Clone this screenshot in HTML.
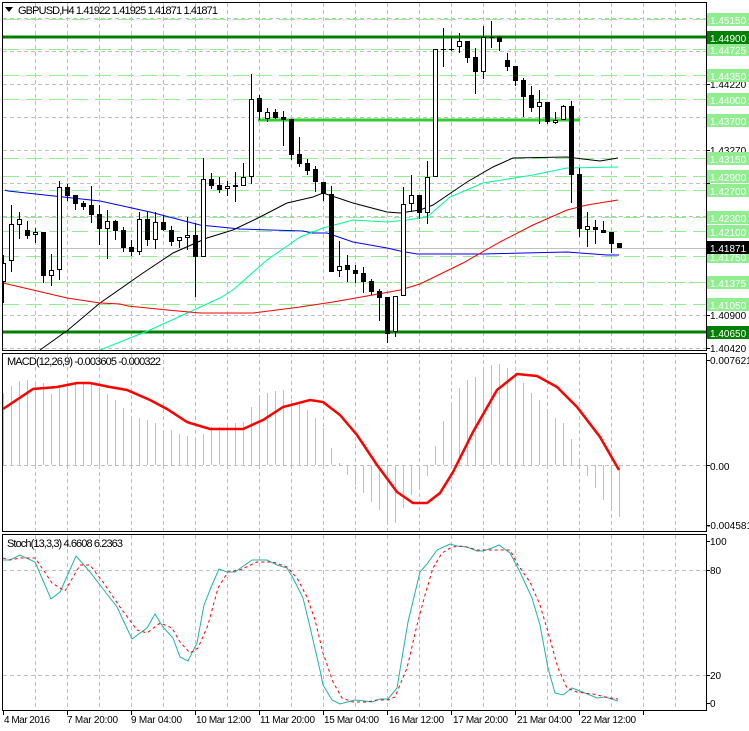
<!DOCTYPE html>
<html><head><meta charset="utf-8"><style>
html,body{margin:0;padding:0;background:#fff;width:749px;height:731px;overflow:hidden}
svg{display:block;font-family:"Liberation Sans",sans-serif;font-size:11px}
.ax text{font-size:10px}
</style></head><body>
<svg width="749" height="731" viewBox="0 0 749 731" xmlns="http://www.w3.org/2000/svg">
<defs>
<clipPath id="cm"><rect x="3" y="3" width="703" height="347"/></clipPath>
<clipPath id="cd"><rect x="3" y="354" width="703" height="177"/></clipPath>
<clipPath id="cs"><rect x="3" y="535" width="703" height="175"/></clipPath>
</defs>
<g stroke="#c0c0c0" stroke-dasharray="4,3" stroke-width="1">
<path d="M35.5 3V710M67.5 3V710M99.5 3V710M131.5 3V710M163.5 3V710M195.5 3V710M227.5 3V710M259.5 3V710M291.5 3V710M323.5 3V710M355.5 3V710M387.5 3V710M419.5 3V710M451.5 3V710M483.5 3V710M515.5 3V710M547.5 3V710M579.5 3V710M611.5 3V710M643.5 3V710M675.5 3V710"/>
<path d="M3 18.5H706M3 51.5H706M3 84.5H706M3 117.5H706M3 150.5H706M3 183.5H706M3 216.5H706M3 282.5H706M3 315.5H706M3 348.5H706M3 465.5H706M3 570.5H706M3 675.5H706"/>
</g>
<rect x="0" y="351" width="706" height="2" fill="#fff"/>
<rect x="0" y="532" width="706" height="2" fill="#fff"/>
<g stroke="#90ee90" stroke-dasharray="16,7" stroke-width="1">
<path d="M3 19.5H706M3 49.5H706M3 75.5H706M3 99.5H706M3 158.5H706M3 176.5H706M3 190.5H706M3 217.5H706M3 231.5H706M3 256.5H706M3 282.5H706M3 304.5H706"/>
</g>
<path d="M3 248.5H706" stroke="#c0c0c0"/>
<g clip-path="url(#cm)">
<path d="M3 37H706M3 332H706" stroke="#008000" stroke-width="3"/>
<path d="M258 120H580" stroke="#32cd32" stroke-width="3"/>
<g fill="none" stroke-width="1">
<polyline stroke="#0000ff" points="5,190 8,191 100,201 150,212 200,225 240,229 303,231 312,233 327,233 353,242 387,248 400,251 417,254 483,254 567,252 607,255 619,255"/>
<polyline stroke="#000" points="40,350 68,330 100,303 143,273 173,253 207,238 233,230 260,217 287,203 313,197 323,193 353,203 387,212 400,213 420,210 433,205 467,182 493,167 513,158 567,157 583,159 600,161 618,158"/>
<polyline stroke="#00fa9a" points="100,350 150,330 220,298 233,290 267,260 300,237 323,228 353,220 387,222 407,220 427,217 450,197 483,183 533,175 567,168 618,167"/>
<polyline stroke="#ff0000" points="3,283 33,290 67,298 100,303 120,304 128,306 167,310 200,313 220,313 253,313 300,307 333,302 367,296 400,290 420,284 463,263 500,242 533,225 567,210 587,205 618,200"/>
</g>
<path stroke="#000" stroke-width="1" d="M3.5 255V303M11.5 205V272M19.5 212V239M27.5 221V239M35.5 228V243M43.5 232V283M51.5 254V286M59.5 181V280M67.5 184V201M75.5 195V210M83.5 201V210M91.5 186V223M99.5 205V245M107.5 210V259M115.5 220V240M123.5 227V252M131.5 240V256M139.5 212V255M147.5 212V246M155.5 212V249M163.5 216V231M171.5 226V246M179.5 237V248M187.5 217V250M195.5 223V297M203.5 158V257M211.5 173V189M219.5 177V193M227.5 181V196M235.5 172V202M243.5 163V186M251.5 74V184M259.5 95V120M267.5 108V122M275.5 109V119M283.5 111V146M291.5 119V160M299.5 137V167M307.5 159V175M315.5 166V192M323.5 182V201M331.5 186V272M339.5 241V277M347.5 255V282M355.5 265V283M363.5 267V293M371.5 279V295M379.5 289V321M387.5 297V343M395.5 296V337M403.5 187V296M411.5 175V212M419.5 195V219M427.5 161V224M435.5 49V177M443.5 28V67M451.5 36V51M459.5 33V53M467.5 41V63M475.5 48V94M483.5 26V79M491.5 21V48M499.5 36V51M507.5 53V71M515.5 66V86M523.5 78V117M531.5 86V112M539.5 90V124M547.5 102V124M555.5 112V124M563.5 105V120M571.5 101V203M579.5 168V237M587.5 212V247M595.5 220V244M603.5 221V233M611.5 232V253"/>
<path stroke="#000" d="M441 49.5H446M449 49.5H454M489 37.5H494"/>
<g fill="#000">
<rect x="25" y="230" width="5" height="6"/><rect x="41" y="232" width="5" height="44"/><rect x="65" y="187" width="5" height="9"/><rect x="73" y="195" width="5" height="9"/><rect x="81" y="203" width="5" height="4"/><rect x="89" y="205" width="5" height="10"/><rect x="97" y="214" width="5" height="15"/><rect x="113" y="221" width="5" height="10"/><rect x="121" y="230" width="5" height="18"/><rect x="129" y="247" width="5" height="5"/><rect x="145" y="219" width="5" height="21"/><rect x="161" y="222" width="5" height="8"/><rect x="169" y="230" width="5" height="12"/><rect x="193" y="235" width="5" height="22"/><rect x="209" y="179" width="5" height="7"/><rect x="217" y="185" width="5" height="5"/><rect x="233" y="185" width="5" height="2"/><rect x="257" y="98" width="5" height="14"/><rect x="273" y="112" width="5" height="6"/><rect x="281" y="117" width="5" height="3"/><rect x="289" y="119" width="5" height="36"/><rect x="297" y="154" width="5" height="10"/><rect x="305" y="163" width="5" height="8"/><rect x="313" y="169" width="5" height="13"/><rect x="321" y="182" width="5" height="12"/><rect x="329" y="194" width="5" height="78"/><rect x="345" y="265" width="5" height="5"/><rect x="353" y="270" width="5" height="4"/><rect x="361" y="273" width="5" height="9"/><rect x="369" y="281" width="5" height="11"/><rect x="377" y="291" width="5" height="7"/><rect x="385" y="297" width="5" height="37"/><rect x="417" y="195" width="5" height="18"/><rect x="465" y="41" width="5" height="17"/><rect x="473" y="57" width="5" height="15"/><rect x="497" y="37" width="5" height="5"/><rect x="505" y="60" width="5" height="7"/><rect x="513" y="66" width="5" height="15"/><rect x="521" y="80" width="5" height="17"/><rect x="529" y="95" width="5" height="13"/><rect x="545" y="102" width="5" height="20"/><rect x="569" y="106" width="5" height="69"/><rect x="577" y="174" width="5" height="55"/><rect x="593" y="227" width="5" height="3"/><rect x="601" y="230" width="5" height="3"/><rect x="609" y="232" width="5" height="12"/><rect x="617" y="243" width="5" height="5"/>
</g>
<g fill="#fff" stroke="#000" stroke-width="1">
<rect x="1.5" y="263.5" width="4" height="18"/><rect x="9.5" y="224.5" width="4" height="36"/><rect x="17.5" y="219.5" width="4" height="5"/><rect x="33.5" y="232.5" width="4" height="2"/><rect x="49.5" y="270.5" width="4" height="5"/><rect x="57.5" y="187.5" width="4" height="82"/><rect x="105.5" y="221.5" width="4" height="7"/><rect x="137.5" y="219.5" width="4" height="32"/><rect x="153.5" y="222.5" width="4" height="17"/><rect x="177.5" y="237.5" width="4" height="3"/><rect x="185.5" y="235.5" width="4" height="2"/><rect x="201.5" y="179.5" width="4" height="77"/><rect x="225.5" y="186.5" width="4" height="2"/><rect x="241.5" y="177.5" width="4" height="8"/><rect x="249.5" y="99.5" width="4" height="77"/><rect x="265.5" y="112.5" width="4" height="6"/><rect x="337.5" y="266.5" width="4" height="4"/><rect x="393.5" y="296.5" width="4" height="35"/><rect x="401.5" y="204.5" width="4" height="91"/><rect x="409.5" y="195.5" width="4" height="8"/><rect x="425.5" y="177.5" width="4" height="35"/><rect x="433.5" y="49.5" width="4" height="127"/><rect x="457.5" y="41.5" width="4" height="5"/><rect x="481.5" y="37.5" width="4" height="34"/><rect x="537.5" y="102.5" width="4" height="4"/><rect x="553.5" y="120.5" width="4" height="2"/><rect x="561.5" y="106.5" width="4" height="13"/><rect x="585.5" y="226.5" width="4" height="3"/>
</g>
</g>
<g clip-path="url(#cd)">
<path stroke="#c0c0c0" d="M3.5 465V393M11.5 465V386M19.5 465V381M27.5 465V380M35.5 465V382M43.5 465V383M51.5 465V394M59.5 465V387M67.5 465V383M75.5 465V383M83.5 465V383M91.5 465V383M99.5 465V387M107.5 465V394M115.5 465V400M123.5 465V408M131.5 465V416M139.5 465V418M147.5 465V420M155.5 465V423M163.5 465V430M171.5 465V430M179.5 465V434M187.5 465V436M195.5 465V440M203.5 465V434M211.5 465V427M219.5 465V427M227.5 465V423M235.5 465V423M243.5 465V422M251.5 465V407M259.5 465V398M267.5 465V393M275.5 465V391M283.5 465V390M291.5 465V400M299.5 465V404M307.5 465V410M315.5 465V418M323.5 465V428M331.5 465V448M339.5 465V463M347.5 465V475M355.5 465V485M363.5 465V493M371.5 465V502M379.5 465V510M387.5 465V522M395.5 465V523M403.5 465V508M411.5 465V495M419.5 465V490M427.5 465V476M435.5 465V446M443.5 465V421M451.5 465V403M459.5 465V388M467.5 465V380M475.5 465V377M483.5 465V368M491.5 465V365M499.5 465V364M507.5 465V368M515.5 465V373M523.5 465V383M531.5 465V393M539.5 465V400M547.5 465V410M555.5 465V418M563.5 465V423M571.5 465V439M579.5 465V458M587.5 465V476M595.5 465V488M603.5 465V500M611.5 465V510M619.5 465V517"/>
<polyline fill="none" stroke="#ff0000" stroke-width="2.5" points="3,409 33,389 57,387 77,383 90,383 110,387 127,390 150,400 167,409 187,422 190,423 210,429 243,429 263,420 283,407 310,400 323,402 340,415 357,435 377,465 397,492 413,503 427,503 440,493 453,472 473,432 497,390 517,374 537,376 557,387 577,407 600,437 619,470"/>
</g>
<g clip-path="url(#cs)" fill="none">
<polyline stroke="#20b2aa" stroke-width="1" points="3,560 10,560 20,555 35,562 51,599 60,592 76,556 90,572 100,585 117,607 132,639 147,628 155,614 163,627 173,638 180,657 188,661 197,643 204,605 212,585 219,569 227,572 235,572 252,560 267,560 277,565 287,568 293,578 303,598 310,627 320,670 323,685 332,700 340,704 355,700 365,701 372,702 380,699 388,699 397,688 408,622 420,572 427,564 437,550 450,544 457,546 467,547 477,551 483,551 492,548 499,545 510,553 520,572 532,598 540,625 548,668 555,693 563,695 572,688 580,691 597,698 605,697 618,701"/>
<polyline stroke="#ff0000" stroke-width="1" stroke-dasharray="3,3" points="3,558 10,560 20,558 35,558 42,568 52,583 65,591 80,565 90,565 103,582 120,607 137,630 147,633 160,623 172,628 180,642 190,653 198,648 208,625 218,588 228,572 240,570 257,562 273,562 287,567 297,578 307,597 315,620 323,653 333,682 342,698 353,702 367,702 377,700 388,700 395,697 407,668 417,625 425,595 433,568 442,553 452,547 463,546 477,550 497,550 510,550 518,565 530,582 540,605 548,632 558,668 567,688 577,692 593,694 610,698 618,699"/>
</g>
<g fill="none" stroke="#000" stroke-width="1">
<rect x="2.5" y="2.5" width="704" height="348"/>
<rect x="2.5" y="353.5" width="704" height="178"/>
<rect x="2.5" y="534.5" width="704" height="176"/>
</g>
<path stroke="#000" d="M706 84.5h4M706 150.5h4M706 183.5h4M706 315.5h4M706 348.5h4M706 360.5h4M706 465.5h4M706 525.5h4M706 541.5h4M706 570.5h4M706 675.5h4M706 703.5h4M3.5 711v4M67.5 711v4M131.5 711v4M195.5 711v4M259.5 711v4M323.5 711v4M387.5 711v4M451.5 711v4M515.5 711v4M579.5 711v4M643.5 711v4"/>
<path d="M5 7h8l-4 5z" fill="#000"/>
<text x="18" y="14" fill="#000" textLength="200">GBPUSD,H4  1.41922 1.41925 1.41871 1.41871</text>
<text x="7" y="365" fill="#000" textLength="154">MACD(12,26,9) -0.003605 -0.000322</text>
<text x="7" y="547" fill="#000" textLength="116">Stoch(13,3,3) 4.6608 6.2363</text>
<g class="ax">
<g fill="#000">
<text x="710" y="88">1.44220</text><text x="710" y="154">1.43270</text><text x="710" y="319">1.40900</text><text x="710" y="352">1.40420</text>
<text x="710" y="364">0.007621</text><text x="710" y="470">0.00</text><text x="707" y="529">-0.004581</text>
<text x="710" y="545">100</text><text x="710" y="574">80</text><text x="710" y="679">20</text><text x="710" y="707">0</text>
</g>
<g fill="#90ee90">
<rect x="707" y="13" width="42" height="13"/><rect x="707" y="43" width="42" height="13"/><rect x="707" y="69" width="42" height="13"/><rect x="707" y="93" width="42" height="13"/><rect x="707" y="114" width="42" height="13"/><rect x="707" y="152" width="42" height="13"/><rect x="707" y="170" width="42" height="13"/><rect x="707" y="184" width="42" height="13"/><rect x="707" y="211" width="42" height="13"/><rect x="707" y="225" width="42" height="13"/><rect x="707" y="250" width="42" height="13"/><rect x="707" y="276" width="42" height="13"/><rect x="707" y="298" width="42" height="13"/>
</g>
<rect x="707" y="31" width="42" height="13" fill="#008000"/>
<rect x="707" y="326" width="42" height="13" fill="#008000"/>
<rect x="707" y="241" width="42" height="13" fill="#000"/>
<g fill="#fff">
<text x="710" y="24">1.45150</text><text x="710" y="42">1.44900</text><text x="710" y="54">1.44725</text><text x="710" y="80">1.44350</text><text x="710" y="104">1.44000</text><text x="710" y="125">1.43700</text><text x="710" y="163">1.43150</text><text x="710" y="181">1.42900</text><text x="710" y="195">1.42700</text><text x="710" y="222">1.42300</text><text x="710" y="236">1.42100</text><text x="710" y="252">1.41871</text><text x="710" y="261">1.41750</text><text x="710" y="287">1.41375</text><text x="710" y="309">1.41050</text><text x="710" y="337">1.40650</text>
</g>
<g fill="#000">
<text x="4" y="723" textLength="46">4 Mar 2016</text><text x="67" y="723" textLength="51">7 Mar 20:00</text><text x="131" y="723" textLength="51">9 Mar 04:00</text><text x="196" y="723" textLength="55">10 Mar 12:00</text><text x="260" y="723" textLength="55">11 Mar 20:00</text><text x="324" y="723" textLength="55">15 Mar 04:00</text><text x="389" y="723" textLength="55">16 Mar 12:00</text><text x="453" y="723" textLength="55">17 Mar 20:00</text><text x="517" y="723" textLength="55">21 Mar 04:00</text><text x="581" y="723" textLength="55">22 Mar 12:00</text>
</g>
</g>
</svg>
</body></html>
